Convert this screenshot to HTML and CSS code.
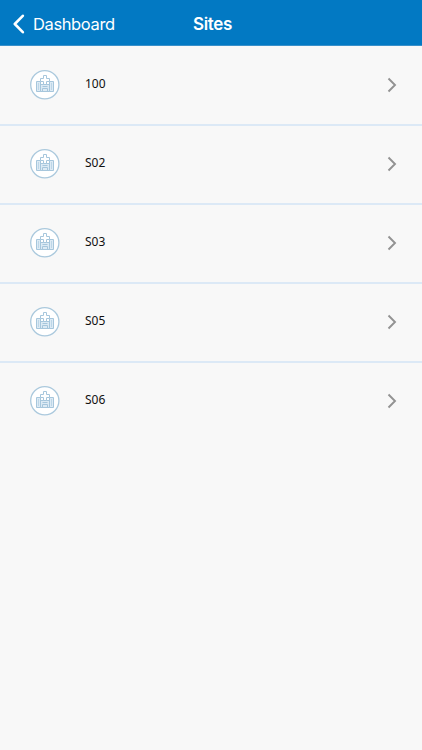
FILE: index.html
```html
<!DOCTYPE html>
<html lang="en">
<head>
<meta charset="utf-8">
<meta name="viewport" content="width=device-width, initial-scale=1">
<title>Sites</title>
<link rel="stylesheet" href="styles.css">
</head>
<body>
<svg class="defs" aria-hidden="true">
  <symbol id="hospital" viewBox="0 0 30 30">
    <circle cx="14.800" cy="14.800" r="14.1" fill="#fff" stroke="#abc9dd" stroke-width="1.3"/>
    <path d="M6.500 11.500h4v10h-4zM19.500 11.500h4v10h-4zM10.500 14.500h9v7h-9z" fill="#dceaf4" stroke="#a6c6dc"/>
    <path d="M13.500 5.500h3v3h3v3h-3v3h-3v-3h-3v-3h3z" fill="#fff" stroke="#a6c6dc"/>
    <path d="M12.500 21.500v-3h5v3M12.500 16.500h5" fill="none" stroke="#a6c6dc"/>
    <path d="M8.500 13v7M21.500 13v7" fill="none" stroke="#bdd6e7"/>
  </symbol>
  <symbol id="chevron" viewBox="0 0 10 16">
    <path d="M1.500 1.500 8 8l-6.500 6.500" fill="none" stroke="#929292" stroke-width="1.900"/>
  </symbol>
</svg>
<header class="bar">
  <a class="back"><svg class="back-icon" viewBox="0 0 12 20"><path d="M9.800 1.800 1.800 10l8 8.200" fill="none" stroke="#fff" stroke-width="2.600" stroke-linecap="round" stroke-linejoin="round"/></svg><span class="back-label">Dashboard</span></a>
  <h1 class="title">Sites</h1>
</header>
<main class="list">
  <div class="row"><svg class="icon"><use href="#hospital"/></svg><span class="name">100</span><svg class="chevron"><use href="#chevron"/></svg></div>
  <div class="row"><svg class="icon"><use href="#hospital"/></svg><span class="name">S02</span><svg class="chevron"><use href="#chevron"/></svg></div>
  <div class="row"><svg class="icon"><use href="#hospital"/></svg><span class="name">S03</span><svg class="chevron"><use href="#chevron"/></svg></div>
  <div class="row"><svg class="icon"><use href="#hospital"/></svg><span class="name">S05</span><svg class="chevron"><use href="#chevron"/></svg></div>
  <div class="row"><svg class="icon"><use href="#hospital"/></svg><span class="name">S06</span><svg class="chevron"><use href="#chevron"/></svg></div>
</main>
</body>
</html>
```
FILE: styles.css
```css
* { box-sizing: border-box; }
body {
  margin: 0;
  min-height: 750px;
  background: #f8f8f8;
  color: #111;
  font-family: "Noto Sans", sans-serif;
}
.defs { display: none; }
.bar {
  display: grid;
  grid-template-columns: 1fr auto 1fr;
  align-items: center;
  height: 46px;
  padding: 0 10px 0 13px;
  border-bottom: 1px solid #3990ca;
  background: #0279c3;
  color: #fff;
  font-family: Inter, sans-serif;
  line-height: 22px;
}
.back { display: flex; align-items: center; gap: 8px; padding-top: 2px; }
.back-icon { width: 12px; height: 20px; }
.back-label { font-size: 16.500px; letter-spacing: -0.38px; }
.title { margin: 2px 0 0; font-size: 17px; font-weight: 600; letter-spacing: -0.3px; }
.list { padding-top: 1px; }
.row {
  display: flex;
  align-items: center;
  height: 79px;
  padding: 0 25px 2px 30px;
  border-bottom: 2px solid #dce9f6;
}
.row:last-child { border-bottom-color: transparent; }
.icon { width: 30px; height: 30px; margin-top: 1px; }
.name {
  flex: 1;
  margin: -1px 0 0 25px;
  font-size: 12px;
  line-height: 18px;
}
.chevron { width: 10px; height: 16px; }
```
